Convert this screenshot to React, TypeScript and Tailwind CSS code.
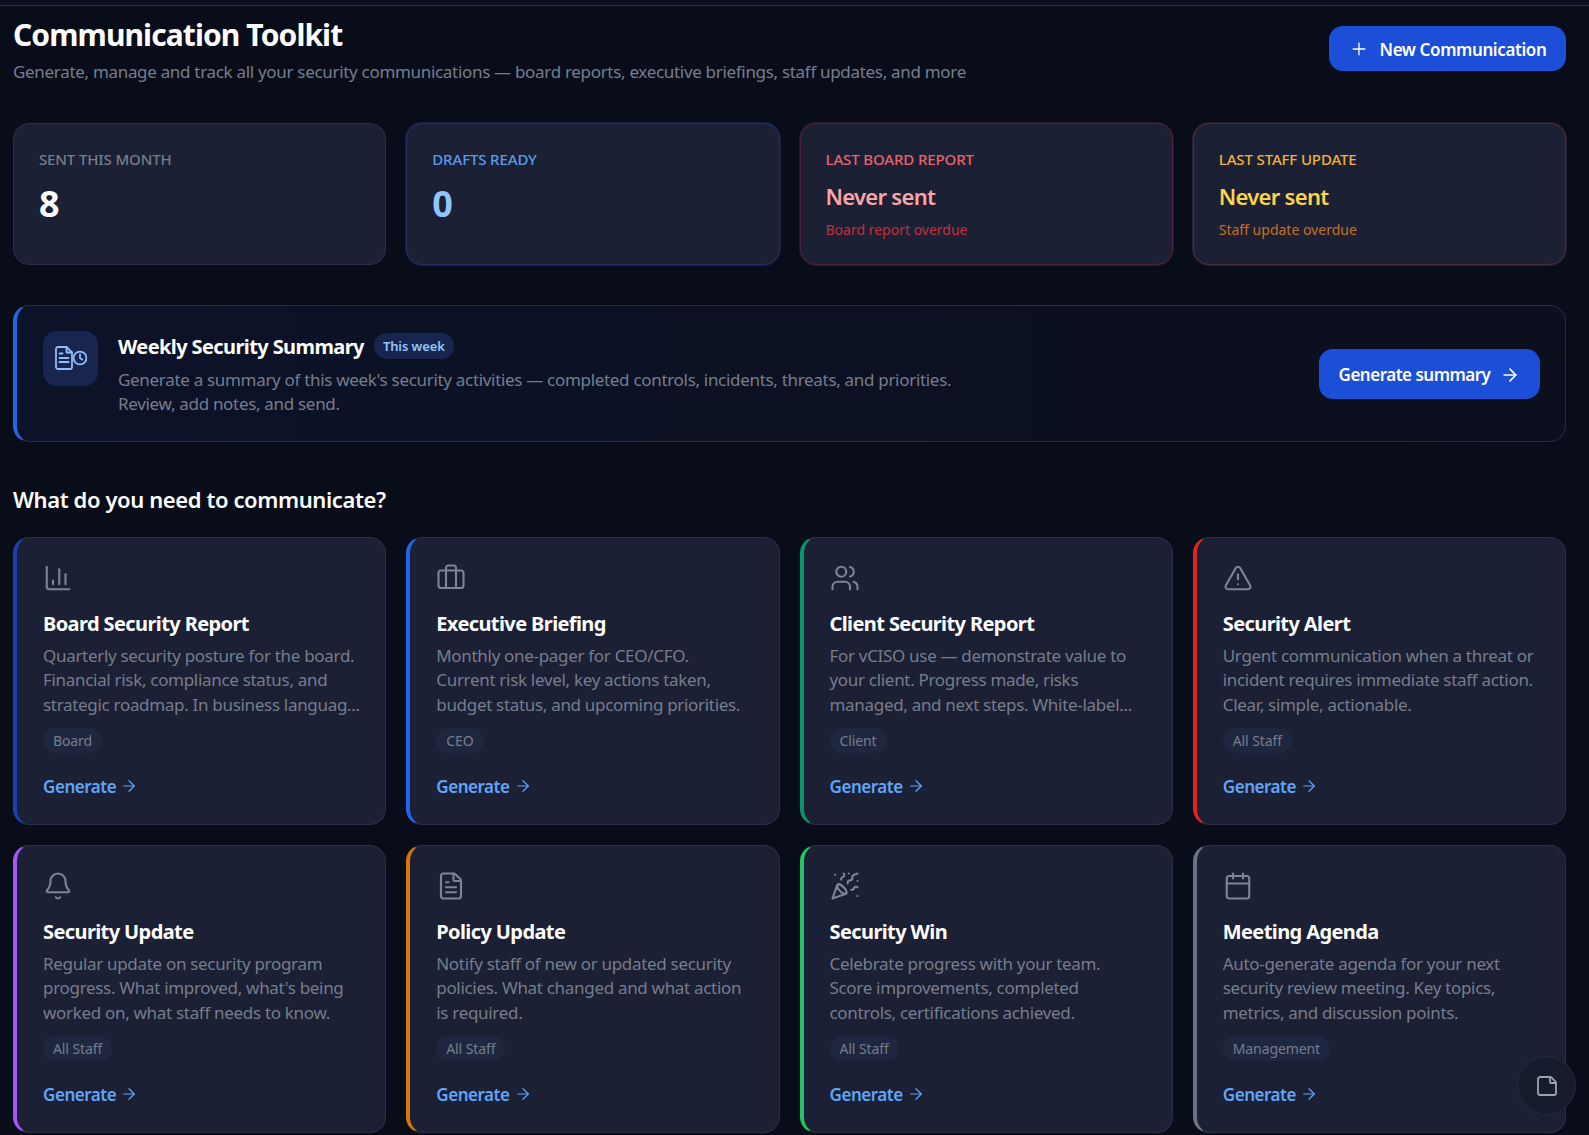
import React from "react";
import {
  ArrowRight,
  Bell,
  Briefcase,
  Calendar,
  ChartColumn,
  FileText,
  PartyPopper,
  Plus,
  StickyNote,
  TriangleAlert,
  Users,
} from "lucide-react";

const cards = [
  {
    title: "Board Security Report",
    lines: ["Quarterly security posture for the board.", "Financial risk, compliance status, and", "strategic roadmap. In business languag..."],
    tag: "Board",
    Icon: ChartColumn,
    accent: "border-l-[#1e40af]",
  },
  {
    title: "Executive Briefing",
    lines: ["Monthly one-pager for CEO/CFO.", "Current risk level, key actions taken,", "budget status, and upcoming priorities."],
    tag: "CEO",
    Icon: Briefcase,
    accent: "border-l-[#2563eb]",
  },
  {
    title: "Client Security Report",
    lines: ["For vCISO use — demonstrate value to", "your client. Progress made, risks", "managed, and next steps. White-label..."],
    tag: "Client",
    Icon: Users,
    accent: "border-l-[#059669]",
  },
  {
    title: "Security Alert",
    lines: ["Urgent communication when a threat or", "incident requires immediate staff action.", "Clear, simple, actionable."],
    tag: "All Staff",
    Icon: TriangleAlert,
    accent: "border-l-[#dc2626]",
  },
  {
    title: "Security Update",
    lines: ["Regular update on security program", "progress. What improved, what's being", "worked on, what staff needs to know."],
    tag: "All Staff",
    Icon: Bell,
    accent: "border-l-[#a855f7]",
  },
  {
    title: "Policy Update",
    lines: ["Notify staff of new or updated security", "policies. What changed and what action", "is required."],
    tag: "All Staff",
    Icon: FileText,
    accent: "border-l-[#d97706]",
  },
  {
    title: "Security Win",
    lines: ["Celebrate progress with your team.", "Score improvements, completed", "controls, certifications achieved."],
    tag: "All Staff",
    Icon: PartyPopper,
    accent: "border-l-[#22c55e]",
  },
  {
    title: "Meeting Agenda",
    lines: ["Auto-generate agenda for your next", "security review meeting. Key topics,", "metrics, and discussion points."],
    tag: "Management",
    Icon: Calendar,
    accent: "border-l-[#6b7280]",
  },
];

const WeeklyIcon = () => (
  <svg width="32" height="24" viewBox="0 0 32 24" fill="none" stroke="#8fbdf8" strokeWidth="1.8" strokeLinecap="round" strokeLinejoin="round">
    <path d="M3 1h8.5L17 6.5V21a2 2 0 0 1-2 2H3a2 2 0 0 1-2-2V3a2 2 0 0 1 2-2z" />
    <path d="M11.5 1v5.5H17" />
    <path d="M4.5 7.5h3M4.5 12h9M4.5 16h9" />
    <circle cx="25" cy="12" r="6.4" />
    <path d="M25 8.5V12l2.2 1.6" />
  </svg>
);

const StatCard = ({ label, labelColor, border, children }: { label: string; labelColor: string; border: string; children: React.ReactNode }) => (
  <div className={`h-[142px] rounded-[16px] border bg-[#1b2034] px-[25px] pt-[25px] ${border}`}>
    <div className={`text-[15px] leading-5 font-medium tracking-[-0.13px] uppercase ${labelColor}`}>{label}</div>
    {children}
  </div>
);

export default function App() {
  return (
    <div className="relative h-screen overflow-hidden bg-[#090d1a] font-['Noto_Sans',sans-serif] text-white">
      {/* top edge of the app bar */}
      <div className="h-[6px] border-b border-[#2a3045] bg-[#0b1020]" />

      <div className="pr-[23px] pl-[13px]">
        <div className="flex items-start justify-between pt-[11px]">
          <div>
            <h1 className="text-[30px] leading-9 font-bold tracking-[-0.9px]">Communication Toolkit</h1>
            <p className="mt-[7px] text-[17px] leading-[24.65px] tracking-[-0.31px] text-[#767d8d]">
              Generate, manage and track all your security communications — board reports, executive briefings, staff updates, and more
            </p>
          </div>
          <button className="mt-[9px] flex h-[45px] w-[237px] items-center justify-center gap-[11px] rounded-[14px] bg-[#1d4ed8] pt-[2px] text-[17px] font-semibold tracking-[-0.4px]">
            <Plus size={20} strokeWidth={1.6} className="-mt-[2px]" />
            New Communication
          </button>
        </div>

        <div className="mt-[38px] grid grid-cols-4 gap-[20px]">
          <StatCard label="Sent this month" labelColor="text-[#767d8d]" border="border-[#2b3145]">
            <div className="mt-[15px] text-[36px] leading-10 font-bold">8</div>
          </StatCard>
          <StatCard label="Drafts ready" labelColor="text-[#5b9bea]" border="border-[#1e3166] ring-1 ring-[#1e3166]/50">
            <div className="mt-[15px] text-[36px] leading-10 font-bold text-[#93c5fd]">0</div>
          </StatCard>
          <StatCard label="Last board report" labelColor="text-[#ea636c]" border="border-[#4b2236] ring-1 ring-[#4b2236]/50">
            <div className="mt-[12px] text-[22px] leading-[30px] font-semibold tracking-[-0.7px] text-[#fca5a5]">Never sent</div>
            <div className="mt-[9px] text-[14px] leading-5 text-[#c4303a]">Board report overdue</div>
          </StatCard>
          <StatCard label="Last staff update" labelColor="text-[#f0b23a]" border="border-[#46303a] ring-1 ring-[#46303a]/50">
            <div className="mt-[12px] text-[22px] leading-[30px] font-semibold tracking-[-0.7px] text-[#fcd34d]">Never sent</div>
            <div className="mt-[9px] text-[14px] leading-5 text-[#c96f22]">Staff update overdue</div>
          </StatCard>
        </div>

        <div className="mt-[40px] flex h-[137px] items-start justify-between rounded-[16px] border border-l-4 border-[#262c40] border-l-[#2563eb] bg-gradient-to-r from-[#0c1228] to-[#0b0f1e] pt-[25px] pr-[25px] pl-[26px]">
          <div className="flex gap-[20px]">
            <div className="flex h-[55px] w-[55px] items-center justify-center rounded-[14px] bg-[#17254f]">
              <WeeklyIcon />
            </div>
            <div className="mt-[2px]">
              <div className="flex h-[26px] items-center gap-[10px]">
                <span className="pt-[2px] text-[20px] font-bold tracking-[-0.6px]">Weekly Security Summary</span>
                <span className="flex h-[26px] items-center rounded-full bg-[#17254f] px-[9px] pt-[2px] text-[13px] font-semibold tracking-[-0.1px] text-[#93c5fd]">This week</span>
              </div>
              <p className="mt-[9px] text-[17px] leading-[24.65px] tracking-[-0.31px] text-[#767d8d]">
                Generate a summary of this week's security activities — completed controls, incidents, threats, and priorities.
                <br />
                Review, add notes, and send.
              </p>
            </div>
          </div>
          <button className="mt-[18px] flex h-[50px] w-[221px] items-center justify-center gap-[10px] rounded-[14px] bg-[#1d4ed8] pt-[2px] text-[17px] font-semibold tracking-[-0.5px]">
            Generate summary
            <ArrowRight size={20} strokeWidth={2} />
          </button>
        </div>

        <h2 className="mt-[41px] mb-[22px] text-[22px] leading-8 font-semibold tracking-[-0.4px]">What do you need to communicate?</h2>

        <div className="grid auto-rows-[288px] grid-cols-4 gap-[20px]">
          {cards.map(({ title, lines, tag, Icon, accent }) => (
            <div key={title} className={`rounded-[16px] border border-l-4 border-[#2a3045] bg-[#1b2034] pt-[25px] pl-[26px] ${accent}`}>
              <Icon size={30} strokeWidth={1.7} className="text-[#7d8494]" />
              <h3 className="mt-[17px] text-[20px] leading-7 font-bold tracking-[-0.6px]">{title}</h3>
              <p className="mt-[6px] text-[17px] leading-[24.8px] tracking-[-0.31px] whitespace-nowrap text-[#767d8d]">
                {lines.map((line) => (
                  <span key={line} className="block">{line}</span>
                ))}
              </p>
              <span className="mt-[10px] inline-block h-[25px] rounded-full bg-[#1f2740] px-[10px] text-[14px] leading-[25px] tracking-[-0.1px] text-[#767d8d]">{tag}</span>
              <div className="mt-[22px] flex items-center gap-[4px] text-[17px] leading-6 font-semibold tracking-[-0.45px] text-[#60a5fa]">
                Generate
                <ArrowRight size={18} strokeWidth={1.6} className="-mt-[2px]" />
              </div>
            </div>
          ))}
        </div>
      </div>

      <button className="absolute top-[1056px] left-[1517px] flex h-[59px] w-[59px] items-center justify-center rounded-full border border-[#262c3f] bg-[#161b2d] text-[#9ca3af]">
        <StickyNote size={24} strokeWidth={1.8} />
      </button>
    </div>
  );
}
